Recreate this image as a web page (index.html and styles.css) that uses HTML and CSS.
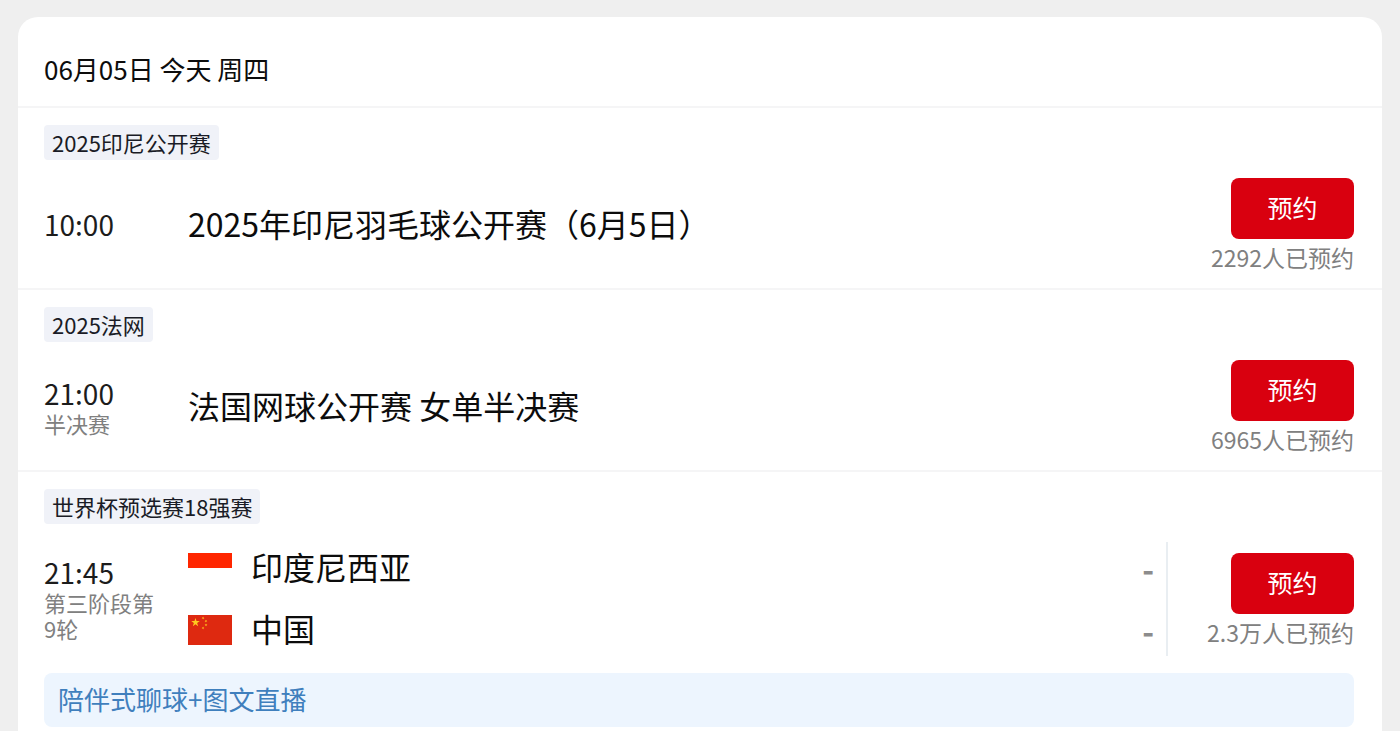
FILE: index.html
```html
<!DOCTYPE html>
<html lang="zh-CN">
<head>
    <meta charset="UTF-8">
    <meta name="viewport" content="width=device-width, initial-scale=1.0">
    <title>赛事预约</title>
    <link rel="stylesheet" href="styles.css">
</head>

<body>
    <main class="schedule">
        <h1 class="date">06月05日 今天 周四</h1>

        <section class="match">
            <span class="tag">2025印尼公开赛</span>
            <div class="match-row">
                <div class="when">
                    <time class="time" datetime="2025-06-05T10:00">10:00</time>
                </div>
                <h2 class="title">2025年印尼羽毛球公开赛（6月5日）</h2>
                <div class="booking">
                    <button type="button" class="btn">预约</button>
                    <p class="count">2292人已预约</p>
                </div>
            </div>
        </section>

        <section class="match">
            <span class="tag">2025法网</span>
            <div class="match-row">
                <div class="when">
                    <time class="time" datetime="2025-06-05T21:00">21:00</time>
                    <p class="stage">半决赛</p>
                </div>
                <h2 class="title">法国网球公开赛 女单半决赛</h2>
                <div class="booking">
                    <button type="button" class="btn">预约</button>
                    <p class="count">6965人已预约</p>
                </div>
            </div>
        </section>

        <section class="match">
            <span class="tag">世界杯预选赛18强赛</span>
            <div class="match-row">
                <div class="when">
                    <time class="time" datetime="2025-06-05T21:45">21:45</time>
                    <p class="stage">第三阶段第9轮</p>
                </div>
                <ul class="teams">
                    <li class="team">
                        <svg class="flag" viewBox="0 0 44 30" aria-hidden="true">
                            <rect width="44" height="30" fill="#fff"/>
                            <rect width="44" height="15" fill="#ff2600"/>
                        </svg>
                        <span class="team-name">印度尼西亚</span>
                        <span class="score">-</span>
                    </li>
                    <li class="team">
                        <svg class="flag" viewBox="0 0 44 30" aria-hidden="true">
                            <defs>
                                <polygon id="star" points="0,-10 2.2,-3.1 9.5,-3.1 3.6,1.2 5.9,8.1 0,3.8 -5.9,8.1 -3.6,1.2 -9.5,-3.1 -2.2,-3.1"/>
                            </defs>
                            <rect width="44" height="30" fill="#de2910"/>
                            <g fill="#ffcb1f">
                                <use href="#star" transform="translate(7.5 7.5) scale(.45)"/>
                                <use href="#star" transform="translate(15 3) rotate(23) scale(.15)"/>
                                <use href="#star" transform="translate(18 6) rotate(46) scale(.15)"/>
                                <use href="#star" transform="translate(18 10) scale(.15)"/>
                                <use href="#star" transform="translate(15 13) rotate(20) scale(.15)"/>
                            </g>
                        </svg>
                        <span class="team-name">中国</span>
                        <span class="score">-</span>
                    </li>
                </ul>
                <div class="booking divided">
                    <button type="button" class="btn">预约</button>
                    <p class="count">2.3万人已预约</p>
                </div>
            </div>
            <a href="#live" class="live">陪伴式聊球+图文直播</a>
        </section>
    </main>
</body>
</html>
```
FILE: styles.css
```css
:root {
    --red: #d9000f;
    --page: #efefef;
    --line: #f5f5f6;
    --gray: #808080;
}

* {
    margin: 0;
    padding: 0;
    box-sizing: border-box;
}

body {
    display: flex;
    min-height: 100vh;
    padding: 17px 18px 0;
    background-color: var(--page);
    color: #0c0c0c;
    font-family: "Noto Sans CJK SC", sans-serif;
}

.schedule {
    flex: 1;
    min-width: 0;
    background-color: #fff;
    border-radius: 20px 20px 0 0;
}

.date {
    padding: 34px 26px 19px;
    font-size: 26px;
    font-weight: 400;
    line-height: 36px;
}

/* Match */
.match {
    padding: 17px 28px 0 26px;
    border-top: 2px solid var(--line);
}

.match:last-child {
    padding-bottom: 4px;
}

.tag {
    display: block;
    width: fit-content;
    padding: 0 8px;
    background-color: #f0f2f8;
    border-radius: 4px;
    color: #1a1c26;
    font-size: 22px;
    line-height: 35px;
}

.match-row {
    display: flex;
    align-items: center;
    padding: 18px 0 17px;
}

.when {
    flex: none;
    width: 118px;
    margin-right: 26px;
    padding-bottom: 2px;
}

.time {
    display: block;
    color: #1c1c1c;
    font-size: 28px;
    line-height: 34px;
}

.stage {
    color: var(--gray);
    font-size: 22px;
    line-height: 26px;
}

.title {
    flex: 1;
    padding-bottom: 4px;
    font-size: 32px;
    font-weight: 400;
    line-height: 44px;
}

/* Teams */
.teams {
    flex: 1;
    display: grid;
    gap: 10px;
    list-style: none;
}

.team {
    display: flex;
    align-items: center;
    gap: 19px;
    padding-right: 12px;
    font-size: 32px;
    line-height: 48px;
}

.flag {
    flex: none;
    width: 44px;
    height: 30px;
}

.team-name {
    flex: 1;
    padding-bottom: 4px;
}

.score {
    color: #8c8c8c;
    font-weight: 700;
}

/* Booking */
.booking {
    flex: none;
    display: flex;
    flex-direction: column;
    align-items: flex-end;
    justify-content: center;
    gap: 4px;
    width: 188px;
}

.divided {
    align-self: stretch;
    border-left: 2px solid #e9eef2;
}

.btn {
    min-width: 123px;
    padding: 0 20px 2px;
    background-color: var(--red);
    border: none;
    border-radius: 8px;
    color: #fff;
    font-family: inherit;
    font-size: 25px;
    line-height: 59px;
    cursor: pointer;
}

.count {
    color: var(--gray);
    font-size: 23px;
    line-height: 28px;
}

.live {
    display: block;
    padding: 0 14px 2px;
    background-color: #edf5fe;
    border-radius: 8px;
    color: #3f7fbd;
    font-size: 26px;
    line-height: 52px;
    text-decoration: none;
}
```
